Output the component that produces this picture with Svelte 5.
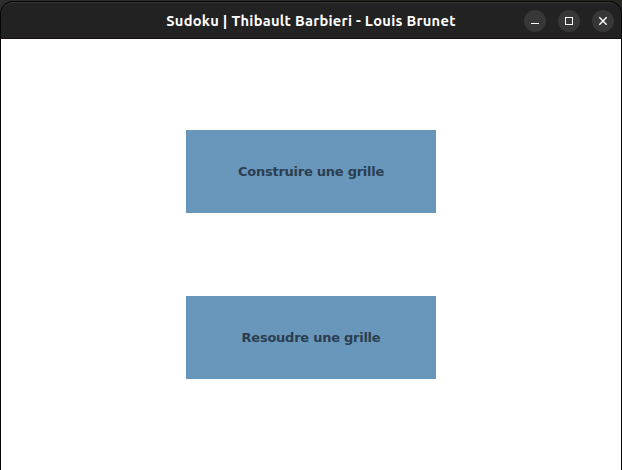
<script>
  const title = 'Sudoku | Thibault Barbieri - Louis Brunet';
  const actions = ['Construire une grille', 'Resoudre une grille'];
</script>

<div class="desktop">
  <div class="window">
    <header>
      <h1>{title}</h1>
      <div class="controls">
        <button aria-label="Minimize">
          <svg width="22" height="22" viewBox="0 0 22 22"><path d="M7 13.5h8" /></svg>
        </button>
        <button aria-label="Maximize">
          <svg width="22" height="22" viewBox="0 0 22 22"><path shape-rendering="crispEdges" d="M7.5 7.5h7v7h-7z" /></svg>
        </button>
        <button aria-label="Close">
          <svg width="22" height="22" viewBox="0 0 22 22"><path class="cross" d="M7.3 7.3l7.4 7.4M14.7 7.3l-7.4 7.4" /></svg>
        </button>
      </div>
    </header>
    <main>
      {#each actions as action}
        <button class="action">{action}</button>
      {/each}
    </main>
  </div>
</div>

<style>
  :global(body) {
    overflow: hidden;
  }

  .desktop {
    box-sizing: border-box;
    width: 622px;
    height: 470px;
    padding-top: 1px;
    background: linear-gradient(90deg, #2d2d2d 0 321px, #25261f 321px) 0 0 / 100% 14px no-repeat #000;
  }

  .window {
    box-sizing: border-box;
    height: 469px;
    display: flex;
    flex-direction: column;
    border: 1px solid #050505;
    border-bottom: 0;
    border-radius: 13px 13px 0 0;
    background: #222;
    overflow: hidden;
  }

  header {
    box-sizing: border-box;
    height: 37px;
    flex: none;
    display: grid;
    grid-template-columns: 1fr auto 1fr;
    align-items: center;
    border-top: 1px solid #363636;
    border-bottom: 1px solid #150d10;
    border-radius: 12px 12px 0 0;
    background: #222;
  }

  h1 {
    grid-column: 2;
    margin: 0;
    color: #fff;
    font: bold 14.667px/20px Ubuntu, 'Noto Sans', sans-serif;
    letter-spacing: 0.28px;
    white-space: nowrap;
  }

  .controls {
    display: flex;
    justify-content: flex-end;
    gap: 12px;
    padding-right: 7px;
  }

  .controls button {
    display: flex;
    width: 22px;
    height: 22px;
    padding: 0;
    border: 0;
    border-radius: 50%;
    background: #373737;
  }

  path {
    fill: none;
    stroke: #fff;
    stroke-width: 1;
  }

  .cross {
    stroke-width: 1.4;
  }

  main {
    flex: 1;
    display: flex;
    flex-direction: column;
    align-items: center;
    gap: 83px;
    padding-top: 91px;
    background: #fff;
  }

  .action {
    width: 250px;
    height: 83px;
    padding: 0;
    border: 0;
    background: #6897bb;
    color: #2b3e50;
    font: bold 13px/16px 'DejaVu Sans', sans-serif;
    letter-spacing: -0.25px;
  }
</style>
